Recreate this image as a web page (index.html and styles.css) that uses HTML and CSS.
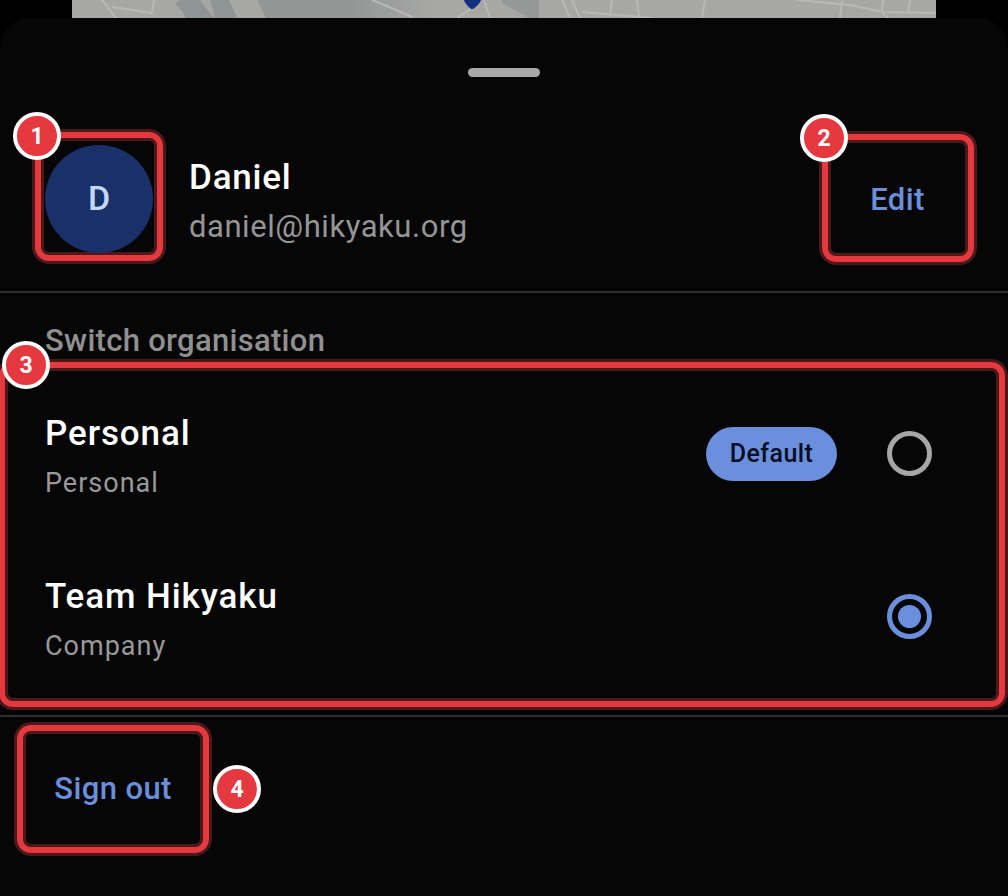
FILE: index.html
```html
<!DOCTYPE html>
<html lang="en">
<head>
    <meta charset="UTF-8">
    <meta name="viewport" content="width=device-width, initial-scale=1.0">
    <link rel="stylesheet" href="styles.css">
    <title>Account</title>
</head>
<body>
    <div class="map">
        <svg class="map-art" width="864" height="18" viewBox="0 0 864 18">
            <defs>
                <linearGradient id="fade" x1="0" y1="0" x2="1" y2="0">
                    <stop offset="0.55" stop-color="#929796"/>
                    <stop offset="1" stop-color="#a7a8a6"/>
                </linearGradient>
            </defs>
            <path d="M107 0 L128 0 L142 18 L113 18 Q112 10 103 5 Z" fill="#8f9594"/>
            <path d="M138 0 L157 0 L165 18 L143 18 Z" fill="#8f9594"/>
            <path d="M185 0 L360 0 L360 18 L194 18 Z" fill="url(#fade)"/>
            <path d="M430 0 L467 0 L467 18 L457 18 L430 3 Z" fill="#949897"/>
            <g fill="none" stroke="#b8b9b7" stroke-width="2">
                <path d="M30 0 L44 18"/>
                <path d="M40 7 L80 13 L82 0"/>
                <path d="M300 0 L322 9 L340 17"/>
                <path d="M385 18 L400 8"/>
                <path d="M418 18 L412 0"/>
                <path d="M490 0 L498 18"/>
                <path d="M500 0 L508 18"/>
                <path d="M540 0 L538 13"/>
                <path d="M510 12 L580 18"/>
                <path d="M565 0 L567 18"/>
                <path d="M633 0 L630 18"/>
                <path d="M725 0 L778 5 L811 12 L864 13"/>
                <path d="M770 0 L768 18"/>
                <path d="M811 0 L810 12 L816 18"/>
                <path d="M838 0 L836 13"/>
            </g>
            <path d="M392 0 L409 0 Q408 4 401 9 L399 9 Q393 4 392 0 Z" fill="#12307f"/>
        </svg>
    </div>

    <div class="sheet">
        <div class="handle"></div>

        <div class="profile">
            <div class="mark avatar-mark">
                <div class="avatar">D</div>
                <span class="callout callout-1">1</span>
            </div>
            <div class="who">
                <div class="who-name">Daniel</div>
                <div class="who-mail">daniel@hikyaku.org</div>
            </div>
            <button class="mark link edit-btn">Edit
                <span class="callout callout-2">2</span>
            </button>
        </div>

        <hr class="rule">

        <div class="section-label">Switch organisation</div>

        <div class="mark org-list">
            <span class="callout callout-3">3</span>
            <div class="org">
                <div class="org-text">
                    <div class="org-name">Personal</div>
                    <div class="org-kind">Personal</div>
                </div>
                <span class="pill">Default</span>
                <span class="radio"></span>
            </div>
            <div class="org">
                <div class="org-text">
                    <div class="org-name">Team Hikyaku</div>
                    <div class="org-kind">Company</div>
                </div>
                <span class="radio radio-on"></span>
            </div>
        </div>

        <hr class="rule rule-low">

        <button class="mark link signout-btn">Sign out
            <span class="callout callout-4">4</span>
        </button>
    </div>
</body>
</html>
```

FILE: styles.css
```css
*
{
    box-sizing: border-box;
    font-family: Roboto, 'Liberation Sans', sans-serif;
}
html, body{margin: 0;height: 896px;overflow: hidden;background: #000;}

.map{height: 18px;margin: 0 72px;background: #a7a8a6;overflow: hidden;}
.map-art{display: block;}

.sheet{height: 878px;background: #060606;border-radius: 30px 30px 0 0;padding-top: 50px;}
.handle{width: 72px;height: 9px;margin: 0 auto;border-radius: 5px;background: #a8a8a8;}

/* red annotation frame */
.mark{
    position: relative;
    border: 6px solid #e5393f;
    border-radius: 14px;
    box-shadow: 0 0 0 3px #4a191b, inset 0 0 0 3px #4a191b;
}
.callout{
    position: absolute;
    width: 48px;
    height: 48px;
    display: flex;
    align-items: center;
    justify-content: center;
    border: 4px solid #fff;
    border-radius: 50%;
    background: #e5393f;
    color: #fff;
    font-size: 23px;
    font-weight: 700;
    letter-spacing: 0;
    z-index: 2;
}
.callout-1{left: -28px;top: -26px;}
.callout-2{left: -28px;top: -26px;}
.callout-3{left: -3px;top: -27px;}
.callout-4{left: 190px;top: 34px;}

.profile{display: flex;align-items: flex-start;padding: 55px 34px 29px 35px;}
.avatar-mark{width: 128px;height: 129px;padding: 7px 4px 0;}
.avatar{
    width: 108px;
    height: 108px;
    border-radius: 50%;
    background: #1a3069;
    color: #c5d8fb;
    font-size: 34px;
    font-weight: 500;
    padding-bottom: 2px;
    display: flex;
    align-items: center;
    justify-content: center;
}
.who{margin: 24px 0 0 26px;}
.who-name{font-size: 35px;line-height: 44px;font-weight: 500;color: #fff;letter-spacing: 0.8px;}
.who-mail{font-size: 31px;line-height: 44px;margin-top: 5px;color: #959595;letter-spacing: 0.55px;}

.link{background: none;color: #6a8fdc;font-size: 31px;font-weight: 500;letter-spacing: 0.4px;padding: 0;cursor: pointer;}
.edit-btn{width: 152px;height: 128px;margin: 2px 0 0 auto;padding: 2px 1px 0 0;}
.signout-btn{display: block;width: 192px;height: 128px;margin: 8px 0 0 17px;padding-bottom: 2px;}

.rule{height: 2px;margin: 0;border: 0;background: #2e2e2e;}
.rule-low{margin-top: 8px;}

.section-label{padding-top: 28px;height: 69px;font-size: 31px;line-height: 40px;font-weight: 500;color: #909090;letter-spacing: 0.3px;margin-left: 45px;}

.org-list{margin: 0 3px 0 -1px;height: 345px;padding: 4px 67px 3px 40px;}
.org{display: flex;align-items: center;height: 163px;}
.org-text{flex: 1;padding-top: 6px;}
.org-name{font-size: 35px;line-height: 44px;font-weight: 500;color: #fff;letter-spacing: 0.9px;}
.org-kind{font-size: 27px;line-height: 36px;margin-top: 9px;color: #999;letter-spacing: 1px;}
.pill{
    width: 131px;
    height: 54px;
    margin-right: 50px;
    border-radius: 27px;
    background: #6a8fdc;
    color: #060d24;
    font-size: 25px;
    font-weight: 500;
    letter-spacing: 0.4px;
    display: flex;
    align-items: center;
    justify-content: center;
}
.radio{width: 45px;height: 45px;border: 5px solid #a6a6a6;border-radius: 50%;display: flex;align-items: center;justify-content: center;}
.radio-on{border-color: #6a8fdc;}
.radio-on::after{content: "";width: 23px;height: 23px;border-radius: 50%;background: #6a8fdc;}
```
